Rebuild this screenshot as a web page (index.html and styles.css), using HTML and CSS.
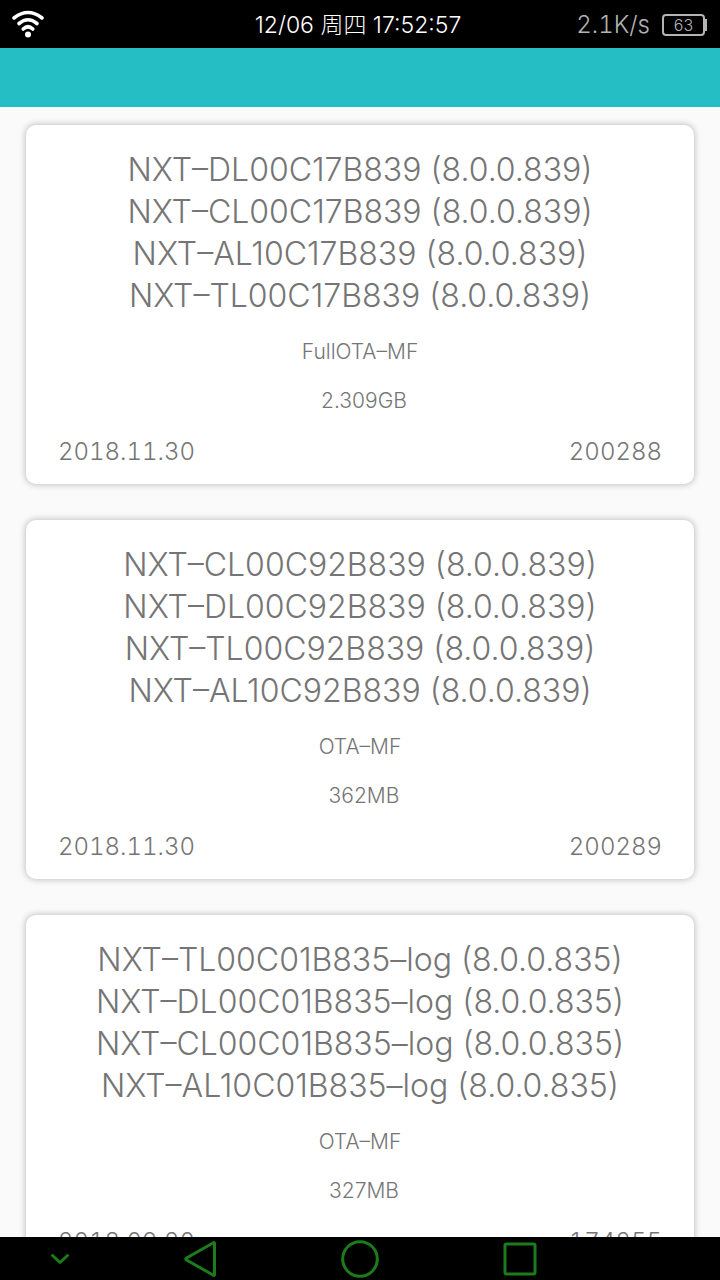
FILE: index.html
```html
<!DOCTYPE html>
<html lang="zh-CN">
<head>
    <meta charset="UTF-8">
    <meta name="viewport" content="width=device-width, initial-scale=1.0">
    <title>NXT OTA</title>
    <link rel="stylesheet" href="styles.css">
</head>
<body>
    <!-- Status bar -->
    <div class="status-bar">
        <svg class="wifi-icon" width="34" height="30" viewBox="0 0 34 30" fill="none" stroke="#fff" stroke-width="3.6" stroke-linecap="round" aria-hidden="true">
            <path d="M3 8Q17 -3 31 8"/>
            <path d="M8 13.500Q17 6 26 13.500"/>
            <path d="M12.200 19Q17 14.500 21.800 19"/>
            <circle cx="17" cy="24.500" r="3" fill="#fff" stroke="none"/>
        </svg>
        <time class="clock">12/06 周四 17:52:57</time>
        <div class="status-right">
            <span class="speed">2.1K/s</span>
            <span class="battery">63</span>
        </div>
    </div>

    <header class="app-bar"></header>

    <!-- Firmware list -->
    <main class="list">
        <article class="card">
            <h2 class="card-title">
                NXT–DL00C17B839 (8.0.0.839)<br>
                NXT–CL00C17B839 (8.0.0.839)<br>
                NXT–AL10C17B839 (8.0.0.839)<br>
                NXT–TL00C17B839 (8.0.0.839)
            </h2>
            <p class="card-type">FullOTA–MF</p>
            <p class="card-size">2.309GB</p>
            <div class="card-footer">
                <span>2018.11.30</span>
                <span>200288</span>
            </div>
        </article>

        <article class="card">
            <h2 class="card-title">
                NXT–CL00C92B839 (8.0.0.839)<br>
                NXT–DL00C92B839 (8.0.0.839)<br>
                NXT–TL00C92B839 (8.0.0.839)<br>
                NXT–AL10C92B839 (8.0.0.839)
            </h2>
            <p class="card-type">OTA–MF</p>
            <p class="card-size">362MB</p>
            <div class="card-footer">
                <span>2018.11.30</span>
                <span>200289</span>
            </div>
        </article>

        <article class="card">
            <h2 class="card-title">
                NXT–TL00C01B835–log (8.0.0.835)<br>
                NXT–DL00C01B835–log (8.0.0.835)<br>
                NXT–CL00C01B835–log (8.0.0.835)<br>
                NXT–AL10C01B835–log (8.0.0.835)
            </h2>
            <p class="card-type">OTA–MF</p>
            <p class="card-size">327MB</p>
            <div class="card-footer">
                <span>2018.09.20</span>
                <span>174255</span>
            </div>
        </article>
    </main>

    <!-- Navigation keys -->
    <nav class="nav-bar">
        <button class="nav-key" type="button" aria-label="Hide">
            <svg width="20" height="14" viewBox="0 0 20 14"><path d="M2.500 3.500L10 10.500L17.500 3.500"/></svg>
        </button>
        <button class="nav-key" type="button" aria-label="Back">
            <svg width="40" height="40" viewBox="0 0 40 40"><path d="M34.500 4.500V35.500Q34.500 37 33 36L6.500 21Q5 20 6.500 19L33 4Q34.500 3 34.500 4.500Z"/></svg>
        </button>
        <button class="nav-key" type="button" aria-label="Home">
            <svg width="40" height="40" viewBox="0 0 40 40"><circle cx="20" cy="20" r="17.300"/></svg>
        </button>
        <button class="nav-key" type="button" aria-label="Recent">
            <svg width="40" height="40" viewBox="0 0 40 40"><rect x="5" y="5" width="30" height="30" rx="1.500"/></svg>
        </button>
    </nav>
</body>
</html>
```

FILE: styles.css
```css
:root {
    --primary-color: #26bec5;
    --background: #fafafa;
    --text-color: #757575;
    --nav-color: #1c7c1c;
}

* {
    margin: 0;
    padding: 0;
    box-sizing: border-box;
}

body {
    display: flex;
    flex-direction: column;
    height: 100vh;
    overflow: hidden;
    background: var(--background);
    color: var(--text-color);
    font-family: Inter, "Noto Sans CJK SC", sans-serif;
    font-weight: 300;
}

/* Status bar */
.status-bar {
    display: grid;
    grid-template-columns: 1fr auto 1fr;
    align-items: center;
    flex: none;
    height: 48px;
    padding: 2px 15px 0 11px;
    background: #000;
    color: #fff;
}

.clock {
    font-size: 23px;
    line-height: 32px;
}

.status-right {
    display: flex;
    align-items: center;
    justify-content: flex-end;
    gap: 12px;
    color: #b4b4b4;
}

.speed {
    font-size: 24px;
    font-variant-numeric: tabular-nums;
    line-height: 32px;
}

.battery {
    position: relative;
    width: 43px;
    height: 22px;
    border: 2px solid #b4b4b4;
    border-radius: 4px;
    font-size: 16px;
    line-height: 18px;
    text-align: center;
}

.battery::after {
    content: "";
    position: absolute;
    top: 3px;
    right: -4px;
    width: 2px;
    height: 12px;
    background: #b4b4b4;
}

.app-bar {
    flex: none;
    height: 59px;
    background: var(--primary-color);
}

/* Firmware list */
.list {
    display: flex;
    flex-direction: column;
    gap: 36px;
    flex: 1;
    min-height: 0;
    padding: 18px 26px;
    overflow: hidden;
}

.card {
    flex: none;
    padding: 24px 32px 16px;
    background: #fff;
    border-radius: 10px;
    box-shadow: 0 0 6px 1px rgba(0, 0, 0, 0.22);
    text-align: center;
}

.card-title {
    font-size: 32px;
    font-weight: 300;
    line-height: 42px;
    white-space: nowrap;
}

.card-type,
.card-size {
    margin-top: 21px;
    font-size: 21px;
    line-height: 28px;
}

.card-size {
    padding-left: 8px;
}

.card-footer {
    display: flex;
    justify-content: space-between;
    margin-top: 21px;
    font-size: 24px;
    font-variant-numeric: tabular-nums;
    line-height: 32px;
}

/* Navigation keys */
.nav-bar {
    display: grid;
    grid-template-columns: 3fr 4fr 4fr 4fr 3fr;
    align-items: center;
    flex: none;
    height: 43px;
    background: #000;
}

.nav-key {
    display: flex;
    justify-content: center;
    background: none;
    border: none;
}

.nav-key svg {
    fill: none;
    stroke: var(--nav-color);
    stroke-width: 3;
    stroke-linecap: round;
    stroke-linejoin: round;
}
```
